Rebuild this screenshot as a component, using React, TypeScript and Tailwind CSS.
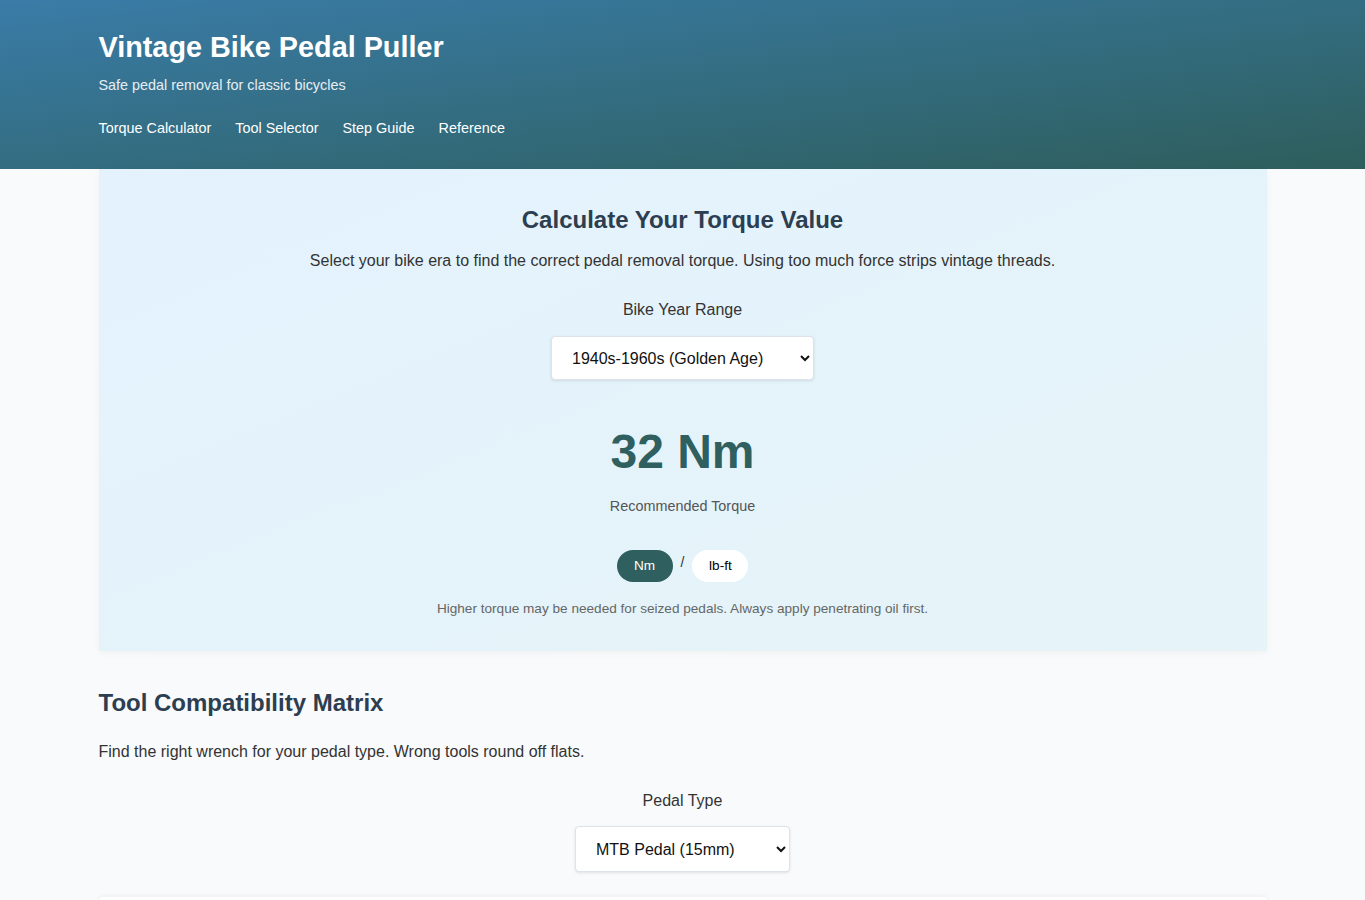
import { useState } from "react";

const eras = [
  { label: "Pre-1940s (Early Classic)", nm: 28 },
  { label: "1940s-1960s (Golden Age)", nm: 32 },
  { label: "1970s-1980s (Bike Boom)", nm: 35 },
  { label: "1990s (Modern Vintage)", nm: 40 },
];

const pedals = ["MTB Pedal (15mm)", "Road Pedal (15mm)", "Hex Spindle (6mm)", "Hex Spindle (8mm)"];

const App = () => {
  const [era, setEra] = useState(1);
  const [unit, setUnit] = useState<"nm" | "lbft">("nm");
  const [pedal, setPedal] = useState(pedals[0]);

  const nm = eras[era].nm;
  const value = unit === "nm" ? `${nm} Nm` : `${Math.round(nm * 0.7376)} lb-ft`;

  return (
    <div className="min-h-screen bg-[#f8fafc] text-[#2c3e50]" style={{ fontFamily: '"Liberation Sans", Arial, sans-serif' }}>
      <header className="bg-gradient-to-br from-[#3a7ca8] to-[#2e5e5c] text-white">
        <div className="mx-auto max-w-[1200px] px-4 pt-[30px] pb-[31px]">
          <h1 className="text-[28.8px] font-bold leading-[34px]">Vintage Bike Pedal Puller</h1>
          <p className="mt-[11px] text-[14.4px] leading-[20px] text-[#e6eef4]">Safe pedal removal for classic bicycles</p>
          <nav className="mt-[23px] flex gap-6 text-[14.4px] leading-[20px]">
            <a href="#torque">Torque Calculator</a>
            <a href="#tools">Tool Selector</a>
            <a href="#steps">Step Guide</a>
            <a href="#reference">Reference</a>
          </nav>
        </div>
      </header>

      <main className="mx-auto max-w-[1200px] px-4">
        <section id="torque" className="bg-gradient-to-br from-[#e3f2fd] to-[#e6f4f8] px-8 pt-[36px] pb-[33px] text-center shadow-[0_2px_8px_rgba(0,0,0,0.04)]">
          <h2 className="text-[24px] font-bold leading-[29px]">Calculate Your Torque Value</h2>
          <p className="mt-[15px] text-[16px] leading-[24px] text-[#333]">
            Select your bike era to find the correct pedal removal torque. Using too much force strips vintage threads.
          </p>
          <label className="mt-[25px] block text-[16px] leading-[24px] text-[#333]">Bike Year Range</label>
          <select
            value={era}
            onChange={(e) => setEra(Number(e.target.value))}
            className="mt-[14px] h-[44px] w-[263px] rounded-[4px] border border-[#dde3e8] bg-white px-4 text-[16px] text-[#111] shadow-[0_1px_3px_rgba(0,0,0,0.1)]"
          >
            {eras.map((e, i) => (
              <option key={e.label} value={i}>
                {e.label}
              </option>
            ))}
          </select>
          <div className="mt-[43px] text-[48px] font-bold leading-[58px] text-[#2f5f5f]">{value}</div>
          <div className="mt-[15px] text-[14.4px] leading-[20px] text-[#555]">Recommended Torque</div>
          <div className="mt-[34px] flex items-center justify-center gap-2">
            <button
              onClick={() => setUnit("nm")}
              className={`h-[32px] w-[56px] rounded-full text-[13.6px] ${unit === "nm" ? "bg-[#2f5f5f] text-white" : "bg-white text-black"}`}
            >
              Nm
            </button>
            <span className="-mt-2 text-[14px] text-[#333]">/</span>
            <button
              onClick={() => setUnit("lbft")}
              className={`h-[32px] w-[56px] rounded-full text-[13.6px] ${unit === "lbft" ? "bg-[#2f5f5f] text-white" : "bg-white text-black"}`}
            >
              lb-ft
            </button>
          </div>
          <p className="mt-[18px] text-[13.6px] leading-[18px] text-[#666]">
            Higher torque may be needed for seized pedals. Always apply penetrating oil first.
          </p>
        </section>

        <section id="tools" className="pt-[37px]">
          <h2 className="text-[24px] font-bold leading-[29px]">Tool Compatibility Matrix</h2>
          <p className="mt-[23px] text-[16px] leading-[24px] text-[#333]">Find the right wrench for your pedal type. Wrong tools round off flats.</p>
          <div className="text-center">
            <label className="mt-[25px] block text-[16px] leading-[24px] text-[#333]">Pedal Type</label>
            <select
              value={pedal}
              onChange={(e) => setPedal(e.target.value)}
              className="mt-[13px] h-[46px] w-[215px] rounded-[4px] border border-[#dde3e8] bg-white px-4 text-[16px] text-[#111] shadow-[0_1px_3px_rgba(0,0,0,0.1)]"
            >
              {pedals.map((p) => (
                <option key={p}>{p}</option>
              ))}
            </select>
          </div>
          <div className="mt-[25px] h-[200px] rounded-t-[4px] bg-white shadow-[0_-1px_4px_rgba(0,0,0,0.05)]" />
        </section>
      </main>
    </div>
  );
};

export default App;
